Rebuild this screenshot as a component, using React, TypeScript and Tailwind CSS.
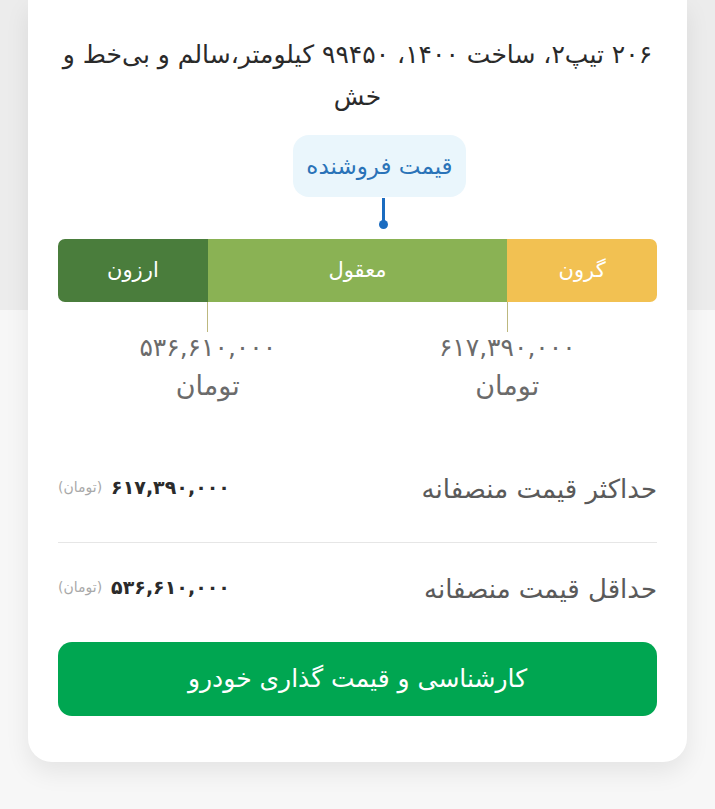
const font = "font-['DejaVu_Sans','Noto_Sans',sans-serif]";

function PriceMark({ amount }: { amount: string }) {
  return (
    <div className="w-1/2 flex flex-col items-center">
      <div className="w-px h-[30px] bg-[#bdb87f]" />
      <div className="text-[25px] leading-[32px] text-[#6b6b6b]">{amount}</div>
      <div className="text-[27px] leading-[44px] text-[#6b6b6b]">تومان</div>
    </div>
  );
}

function FairRow({ label, amount }: { label: string; amount: string }) {
  return (
    <div className="flex items-center justify-between">
      <span className="text-[26px] leading-[36px] text-[#5a5a5a]">{label}</span>
      <div className="flex items-center gap-[9px] pb-[4px]">
        <span className="text-[19px] font-bold text-[#2b2b2b]">{amount}</span>
        <span className="text-[14px] text-[#a8a8a8]">(تومان)</span>
      </div>
    </div>
  );
}

export default function App() {
  return (
    <div
      dir="rtl"
      className={`${font} min-h-[809px] bg-[linear-gradient(to_bottom,#ececec_0px,#ececec_310px,#f7f7f7_310px)] px-[28px] pb-[47px]`}
    >
      <div className="bg-white rounded-b-[24px] shadow-[0_10px_24px_rgba(0,0,0,0.08)] px-[30px] pt-[34px] pb-[46px]">
        <p className="text-center text-[25px] leading-[42px] text-[#2a2a2a]">
          ۲۰۶ تیپ۲، ساخت ۱۴۰۰، ۹۹۴۵۰ کیلومتر،سالم و بی‌خط و
          <br />
          خش
        </p>

        <div dir="ltr" className="mt-[17px]">
          <div className="ml-[235px] w-[173px] flex flex-col items-center">
            <div className="w-full h-[62px] rounded-[16px] bg-[#eaf6fc] flex items-center justify-center">
              <span dir="rtl" className="text-[23px] text-[#2a73b8]">قیمت فروشنده</span>
            </div>
            <div className="ml-[8px] flex flex-col items-center pt-[1px]">
              <div className="w-[3px] h-[25px] bg-[#1b6cc0]" />
              <div className="w-[9px] h-[9px] -mt-[3px] rounded-full bg-[#1b6cc0]" />
            </div>
          </div>
        </div>

        <div className="mt-[10px] h-[63px] rounded-[7px] overflow-hidden flex text-white text-[21px]">
          <div className="w-1/4 bg-[#f2c152] flex items-center justify-center">گرون</div>
          <div className="w-1/2 bg-[#8ab254] flex items-center justify-center">معقول</div>
          <div className="w-1/4 bg-[#4a7d3c] flex items-center justify-center">ارزون</div>
        </div>

        <div className="flex">
          <PriceMark amount="۶۱۷,۳۹۰,۰۰۰" />
          <PriceMark amount="۵۳۶,۶۱۰,۰۰۰" />
        </div>

        <div className="mt-[63px] pb-[35px] border-b border-[#e6e6e6]">
          <FairRow label="حداکثر قیمت منصفانه" amount="۶۱۷,۳۹۰,۰۰۰" />
        </div>
        <div className="pt-[28px]">
          <FairRow label="حداقل قیمت منصفانه" amount="۵۳۶,۶۱۰,۰۰۰" />
        </div>

        <button className="mt-[35px] w-full h-[74px] rounded-[14px] bg-[#00a651] text-white text-[25px]">
          کارشناسی و قیمت گذاری خودرو
        </button>
      </div>
    </div>
  );
}
